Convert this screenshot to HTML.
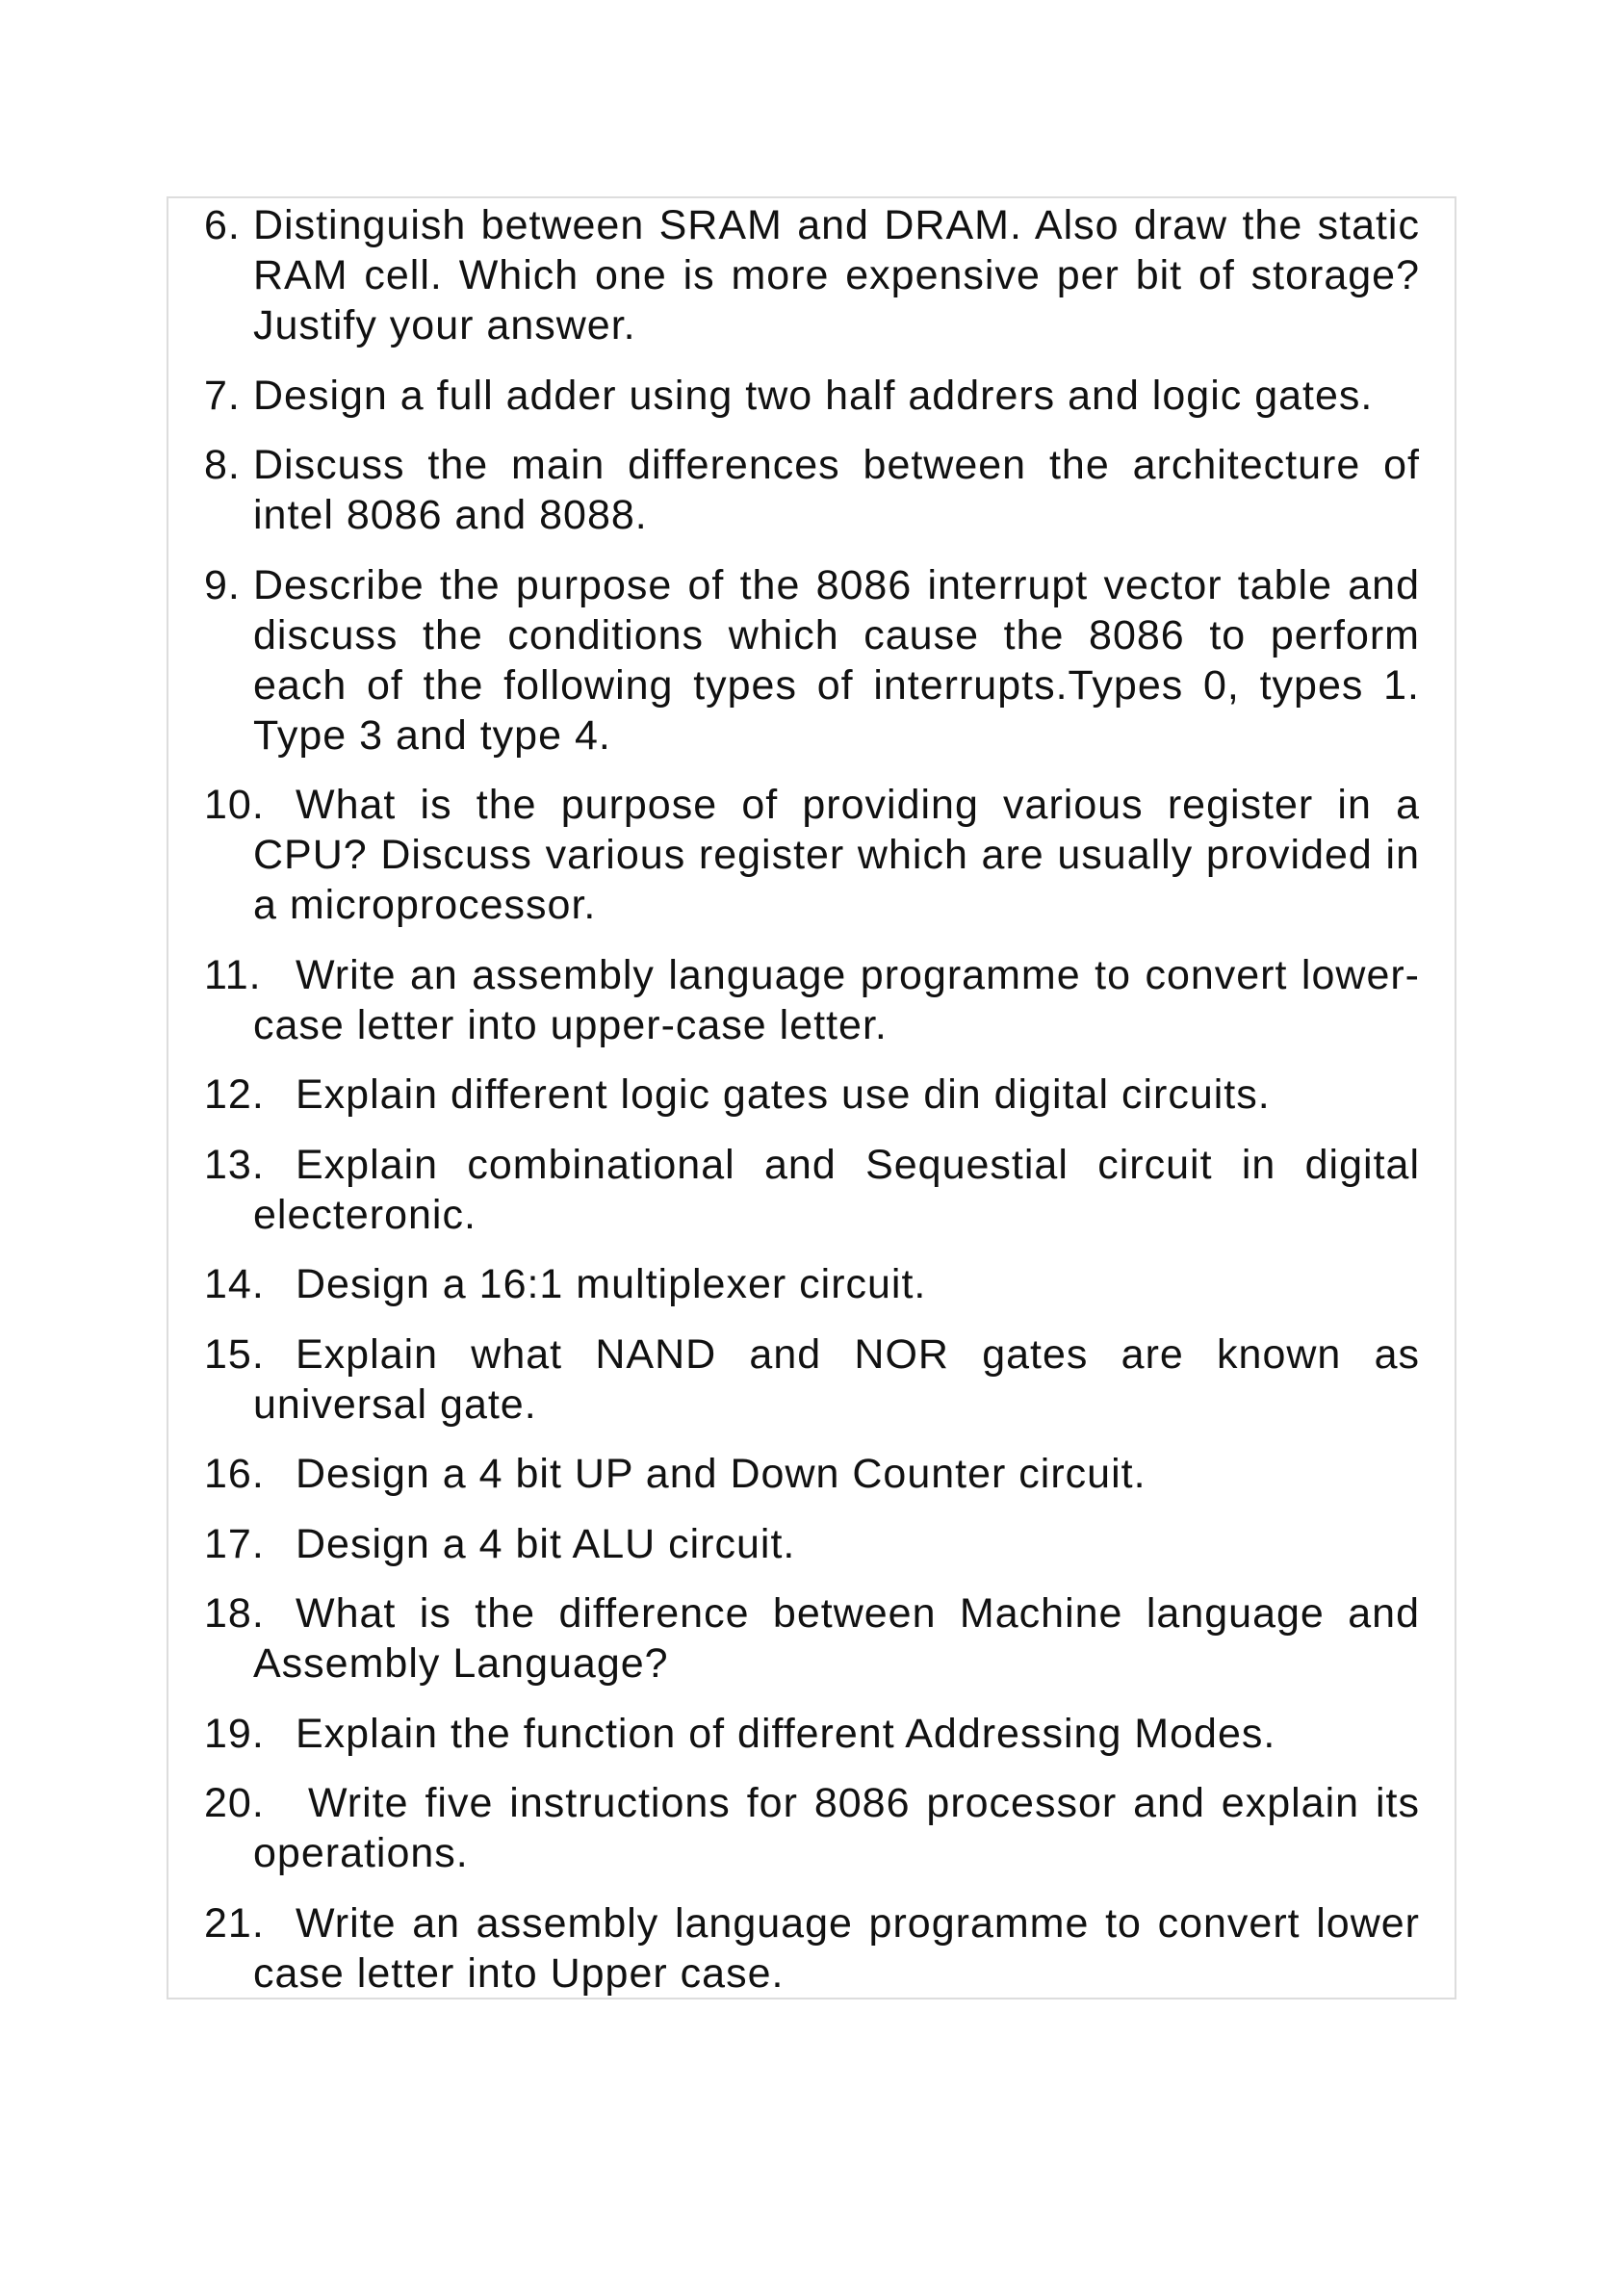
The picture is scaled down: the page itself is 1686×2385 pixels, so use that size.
<!DOCTYPE html>
<html><head><meta charset="utf-8"><style>
html,body{margin:0;padding:0;background:#fff;}
body{width:1686px;height:2385px;position:relative;overflow:hidden;font-family:"Liberation Sans",Arial,sans-serif;color:#111;}
.box{position:absolute;left:173px;top:204px;width:1340px;height:1873px;border:2px solid #ddd;box-sizing:border-box;}
.list{position:absolute;left:263px;top:208px;width:1212px;font-size:43px;line-height:52px;letter-spacing:1.0px;}
.it{margin-bottom:20.5px;position:relative;}
.l{white-space:nowrap;}
.j{text-align:justify;text-align-last:justify;white-space:normal;}
.n{position:absolute;left:-51px;}
.f{margin-left:44px;}
.f2{margin-left:57px;}
</style></head><body>
<div class="box"></div>
<div class="list">
<div class="it"><span class="n">6.</span><div class="l j">Distinguish between SRAM and DRAM. Also draw the static</div><div class="l j">RAM cell. Which one is more expensive per bit of storage?</div><div class="l">Justify your answer.</div></div>
<div class="it"><span class="n">7.</span><div class="l">Design a full adder using two half addrers and logic gates.</div></div>
<div class="it"><span class="n">8.</span><div class="l j">Discuss the main differences between the architecture of</div><div class="l">intel 8086 and 8088.</div></div>
<div class="it"><span class="n">9.</span><div class="l j">Describe the purpose of the 8086 interrupt vector table and</div><div class="l j">discuss the conditions which cause the 8086 to perform</div><div class="l j">each of the following types of interrupts.Types 0, types 1.</div><div class="l">Type 3 and type 4.</div></div>
<div class="it"><span class="n">10.</span><div class="l j f">What is the purpose of providing various register in a</div><div class="l j">CPU? Discuss various register which are usually provided in</div><div class="l">a microprocessor.</div></div>
<div class="it"><span class="n">11.</span><div class="l j f">Write an assembly language programme to convert lower-</div><div class="l">case letter into upper-case letter.</div></div>
<div class="it"><span class="n">12.</span><div class="l f">Explain different logic gates use din digital circuits.</div></div>
<div class="it"><span class="n">13.</span><div class="l j f">Explain combinational and Sequestial circuit in digital</div><div class="l">electeronic.</div></div>
<div class="it"><span class="n">14.</span><div class="l f">Design a 16:1 multiplexer circuit.</div></div>
<div class="it"><span class="n">15.</span><div class="l j f">Explain what NAND and NOR gates are known as</div><div class="l">universal gate.</div></div>
<div class="it"><span class="n">16.</span><div class="l f">Design a 4 bit UP and Down Counter circuit.</div></div>
<div class="it"><span class="n">17.</span><div class="l f">Design a 4 bit ALU circuit.</div></div>
<div class="it"><span class="n">18.</span><div class="l j f">What is the difference between Machine language and</div><div class="l">Assembly Language?</div></div>
<div class="it"><span class="n">19.</span><div class="l f">Explain the function of different Addressing Modes.</div></div>
<div class="it"><span class="n">20.</span><div class="l j f2">Write five instructions for 8086 processor and explain its</div><div class="l">operations.</div></div>
<div class="it"><span class="n">21.</span><div class="l j f">Write an assembly language programme to convert lower</div><div class="l">case letter into Upper case.</div></div>
</div>
</body></html>
